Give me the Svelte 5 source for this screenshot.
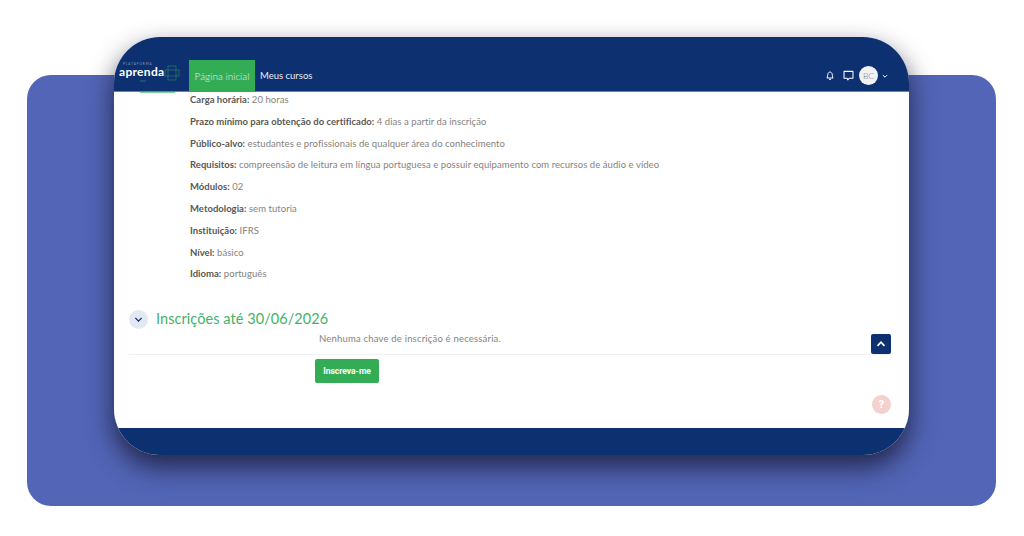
<script>
    const details = [
        { label: 'Carga horária:', value: '20 horas' },
        { label: 'Prazo mínimo para obtenção do certificado:', value: '4 dias a partir da inscrição' },
        { label: 'Público-alvo:', value: 'estudantes e profissionais de qualquer área do conhecimento' },
        { label: 'Requisitos:', value: 'compreensão de leitura em língua portuguesa e possuir equipamento com recursos de áudio e vídeo' },
        { label: 'Módulos:', value: '02' },
        { label: 'Metodologia:', value: 'sem tutoria' },
        { label: 'Instituição:', value: 'IFRS' },
        { label: 'Nível:', value: 'básico' },
        { label: 'Idioma:', value: 'português' }
    ];
</script>

<div class="stage">
    <div class="panel"></div>

    <div class="window">
        <header class="topbar">
            <div class="logo">
                <span class="logo-top">PLATAFORMA</span>
                <span class="logo-name">aprenda</span>
                <span class="logo-sub">mais</span>
                <svg class="logo-mark" viewBox="0 0 16 16" width="16" height="16" fill="none" stroke="#2a7468" stroke-width="0.8">
                    <rect x="4" y="1" width="8" height="14" />
                    <rect x="1" y="5" width="14" height="6" />
                </svg>
            </div>
            <nav class="nav">
                <span class="tab active">Página inicial</span>
                <span class="tab">Meus cursos</span>
            </nav>
            <div class="user">
                <svg viewBox="0 0 16 16" width="10" height="11" fill="none" stroke="#fff" stroke-width="1.6">
                    <path d="M3 12 C4.500 10 4 8 4.500 6 C5 3.500 6.500 2.500 8 2.500 C9.500 2.500 11 3.500 11.500 6 C12 8 11.500 10 13 12 Z" stroke-linejoin="round" />
                    <path d="M6.500 14.200 H9.500" />
                </svg>
                <svg class="chat" viewBox="0 0 16 16" width="11" height="11" fill="none" stroke="#fff" stroke-width="1.5">
                    <path d="M1.500 2 H14.500 V12 H9 L7 14.500 L6 12 H1.500 Z" stroke-linejoin="round" />
                </svg>
                <span class="avatar">BC</span>
                <svg class="caret" viewBox="0 0 10 10" width="6" height="6" fill="none" stroke="#fff" stroke-width="1.6">
                    <path d="M1.500 3.500 L5 7 L8.500 3.500" />
                </svg>
            </div>
        </header>

        <main class="content">
            <span class="logo-line"></span>
            <div class="details">
                {#each details as item}
                    <p><strong>{item.label}</strong> {item.value}</p>
                {/each}
            </div>

            <div class="section-head">
                <span class="toggle">
                    <svg viewBox="0 0 10 10" width="9" height="9" fill="none" stroke="#0d3170" stroke-width="1.5">
                        <path d="M1.500 3.200 L5 6.800 L8.500 3.200" />
                    </svg>
                </span>
                <h2>Inscrições até 30/06/2026</h2>
            </div>
            <p class="no-key">Nenhuma chave de inscrição é necessária.</p>
            <div class="enrol">
                <button class="enrol-btn">Inscreva-me</button>
            </div>

            <span class="top-btn">
                <svg viewBox="0 0 10 10" width="10" height="10" fill="none" stroke="#fff" stroke-width="1.700">
                    <path d="M1.500 6.800 L5 3.200 L8.500 6.800" />
                </svg>
            </span>
            <span class="help">?</span>
        </main>

        <footer class="footer"></footer>
    </div>
</div>

<style>
    :global(body) {
        background: #fff;
        font-family: "Lato", "Open Sans", sans-serif;
    }

    .stage {
        display: grid;
        width: 1024px;
        height: 536px;
        overflow: hidden;
    }

    .panel {
        grid-area: 1 / 1;
        width: 969px;
        height: 431px;
        margin: 75px 0 0 27px;
        background: #5265b6;
        border-radius: 24px;
    }

    .window {
        grid-area: 1 / 1;
        display: flex;
        flex-direction: column;
        width: 795px;
        height: 418px;
        margin: 37px 0 0 114px;
        background: #fff;
        border-radius: 46px;
        overflow: hidden;
        box-shadow: 0 12px 26px rgba(22, 22, 50, 0.8);
    }

    .topbar {
        display: flex;
        align-items: flex-end;
        height: 55px;
        flex: none;
        background: #0d3170;
        border-bottom: 1px solid #6f7f9f;
        box-sizing: border-box;
        color: #fff;
    }

    /* logo */
    .logo {
        position: relative;
        width: 75px;
        height: 32px;
        flex: none;
    }

    .logo-top {
        position: absolute;
        left: 9px;
        top: 4px;
        font-size: 3px;
        line-height: 3px;
        letter-spacing: 1px;
        color: #8fa2c2;
    }

    .logo-name {
        position: absolute;
        left: 5px;
        top: 8px;
        font-size: 12px;
        font-weight: 700;
        line-height: 10px;
        letter-spacing: 0.300px;
    }

    .logo-sub {
        position: absolute;
        left: 26px;
        top: 20px;
        font-size: 3px;
        line-height: 4px;
        color: #2e8f6a;
    }

    .logo-mark {
        position: absolute;
        left: 50px;
        top: 6px;
    }

    .logo-line {
        position: absolute;
        left: 26px;
        top: 0;
        width: 35px;
        height: 1px;
        background: #7fcf98;
    }

    .nav {
        display: flex;
        align-items: stretch;
        height: 31px;
    }

    .tab {
        display: flex;
        align-items: center;
        padding: 0 5px;
        font-size: 9.500px;
        color: #e8edf5;
    }

    .tab.active {
        width: 66px;
        box-sizing: border-box;
        justify-content: center;
        padding: 0;
        background: #32ac55;
        font-size: 10px;
        font-weight: 300;
    }

    .user {
        display: flex;
        align-items: center;
        height: 31px;
        margin-left: auto;
        margin-right: 21px;
    }

    .chat {
        margin-left: 8px;
    }

    .avatar {
        display: flex;
        align-items: center;
        justify-content: center;
        width: 19px;
        height: 19px;
        border-radius: 50%;
        background: #f2f2f4;
        color: #6b7380;
        font-size: 8.500px;
        font-weight: 300;
        margin-left: 5px;
        margin-right: 4px;
    }

    /* contents */
    .content {
        position: relative;
        flex: 1;
        color: #85827e;
        font-size: 9.500px;
        letter-spacing: 0.060px;
    }

    .details {
        padding: 2px 0 0 76px;
    }

    .details p {
        margin: 0;
        height: 21.800px;
        line-height: 12px;
    }

    .details strong {
        color: #5a5854;
        font-weight: 700;
        letter-spacing: 0.020px;
    }

    .section-head {
        display: flex;
        align-items: center;
        gap: 8px;
        margin: 19px 0 0 15px;
    }

    .toggle {
        display: flex;
        align-items: center;
        justify-content: center;
        width: 19px;
        height: 19px;
        border-radius: 50%;
        background: #e4e8f2;
    }

    h2 {
        margin: 0;
        color: #45b266;
        font-size: 14.500px;
        font-weight: 400;
        line-height: 20px;
    }

    .no-key {
        margin: 4px 18px 0 15px;
        padding: 0 0 9px 190px;
        border-bottom: 1px solid #f1f1f1;
        line-height: 12px;
        letter-spacing: 0.190px;
    }

    .enrol {
        padding: 4px 0 0 201px;
    }

    .enrol-btn {
        width: 64px;
        height: 24px;
        padding: 0;
        border: none;
        border-radius: 2px;
        background: #32ac55;
        color: #fff;
        font-family: "Roboto", sans-serif;
        font-size: 8.500px;
        font-weight: 700;
    }

    .top-btn {
        position: absolute;
        right: 18px;
        top: 242px;
        display: flex;
        align-items: center;
        justify-content: center;
        width: 20px;
        height: 20px;
        border-radius: 2px;
        background: #0d3170;
    }

    .help {
        position: absolute;
        right: 18px;
        top: 303px;
        display: flex;
        align-items: center;
        justify-content: center;
        width: 19px;
        height: 19px;
        border-radius: 50%;
        background: #f4d0cf;
        color: #fff;
        font-family: "Roboto", sans-serif;
        font-size: 10.500px;
        font-weight: 900;
    }

    .footer {
        height: 27px;
        flex: none;
        background: #0d3170;
    }
</style>
